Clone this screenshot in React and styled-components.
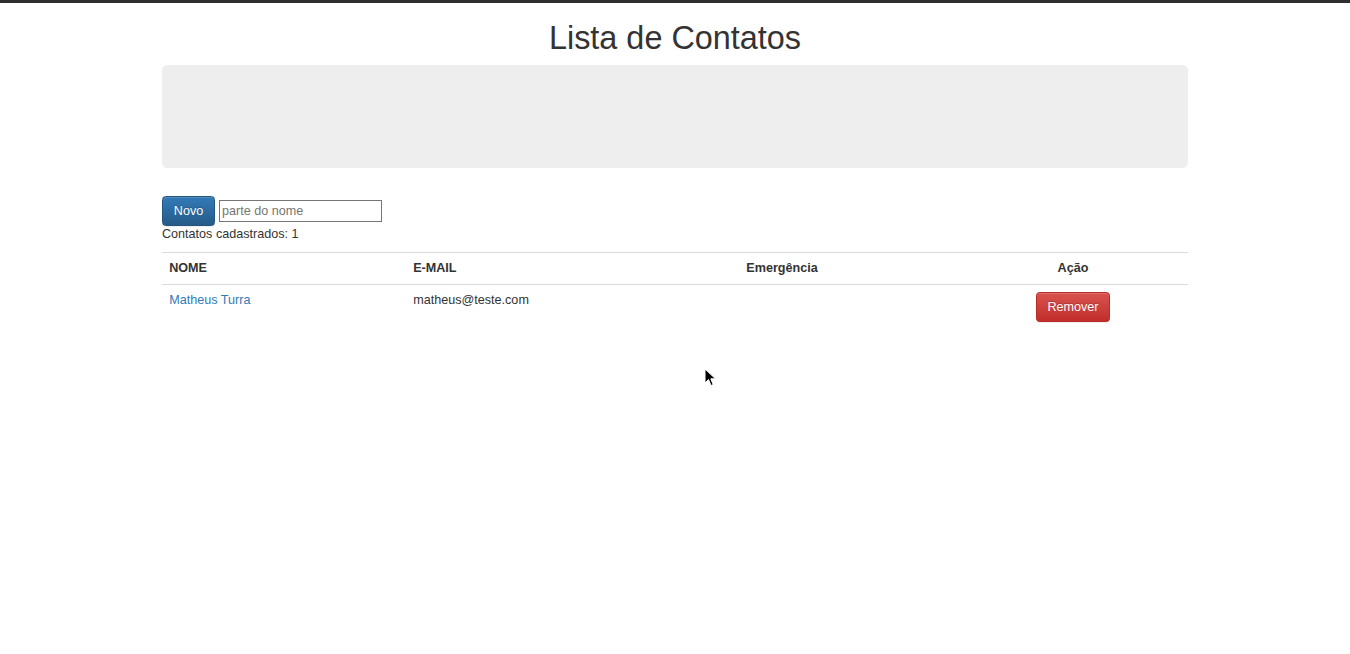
import React, { useState } from 'react'
import styled, { createGlobalStyle } from 'styled-components'

const GlobalStyle = createGlobalStyle`
  html, body {
    margin: 0;
    padding: 0;
    background: #fff;
  }
  body {
    font-family: "Liberation Sans", Arial, Helvetica, sans-serif;
    font-size: 12.6px;
    line-height: 18px;
    color: #333;
  }
`

const TopBar = styled.div`
  height: 3px;
  background: #2e2e2e;
`

const Container = styled.div`
  width: 1026px;
  margin: 0 auto;
`

const Title = styled.h1`
  margin: 18px 0 8px;
  font-size: 32.4px;
  line-height: 35.6px;
  font-weight: 500;
  text-align: center;
  color: #333;
`

const Jumbotron = styled.div`
  height: 103.6px;
  background: #eee;
  border-radius: 5.4px;
  margin-bottom: 28px;
`

const Toolbar = styled.div`
  display: flex;
  align-items: center;
  gap: 4px;
  height: 30px;
`

const Button = styled.button`
  font-family: inherit;
  font-size: 12.6px;
  line-height: 18px;
  padding: 5px 10.8px;
  border-radius: 3.6px;
  border: 1px solid ${(p) => (p.$danger ? '#b92c28' : '#245580')};
  color: #fff;
  cursor: pointer;
  text-shadow: 0 -1px 0 rgba(0, 0, 0, 0.2);
  box-shadow: inset 0 1px 0 rgba(255, 255, 255, 0.15), 0 1px 1px rgba(0, 0, 0, 0.075);
  background-image: ${(p) =>
    p.$danger
      ? 'linear-gradient(to bottom, #d9534f 0, #c12e2a 100%)'
      : 'linear-gradient(to bottom, #337ab7 0, #265a88 100%)'};
`

const Search = styled.input`
  width: 163px;
  height: 21.6px;
  box-sizing: border-box;
  padding: 1px 2px;
  font-family: inherit;
  font-size: 12.6px;
  color: #333;
  border: 1px solid #767676;
  border-radius: 0;
  &::placeholder {
    color: #757575;
  }
`

const Count = styled.div`
  margin-top: -1.5px;
`

const Table = styled.table`
  width: 100%;
  margin-top: 9px;
  border-collapse: collapse;
  table-layout: fixed;
`

const Th = styled.th`
  padding: 6.6px 7.2px;
  text-align: ${(p) => p.$align || 'left'};
  font-weight: bold;
  border-top: 1px solid #ddd;
  border-bottom: 1px solid #ddd;
  vertical-align: bottom;
`

const Td = styled.td`
  padding: ${(p) => (p.$action ? '7.4px' : '6.6px')} 7.2px 6.6px;
  text-align: ${(p) => p.$align || 'left'};
  vertical-align: top;
`

const NameLink = styled.a`
  color: #337ab7;
  text-decoration: none;
`

const CursorMark = styled.svg`
  position: absolute;
  left: 704px;
  top: 368px;
  pointer-events: none;
`

const contacts = [{ id: 1, nome: 'Matheus Turra', email: 'matheus@teste.com', emergencia: '' }]

function App() {
  const [filtro, setFiltro] = useState('')
  const lista = contacts.filter((c) => c.nome.toLowerCase().includes(filtro.toLowerCase()))

  return (
    <>
      <GlobalStyle />
      <TopBar />
      <Container>
        <Title>Lista de Contatos</Title>
        <Jumbotron />
        <Toolbar>
          <Button>Novo</Button>
          <Search placeholder="parte do nome" value={filtro} onChange={(e) => setFiltro(e.target.value)} />
        </Toolbar>
        <Count>Contatos cadastrados: {lista.length}</Count>
        <Table>
          <colgroup>
            <col style={{ width: '244px' }} />
            <col style={{ width: '200px' }} />
            <col style={{ width: '352px' }} />
            <col style={{ width: '230px' }} />
          </colgroup>
          <thead>
            <tr>
              <Th>NOME</Th>
              <Th>E-MAIL</Th>
              <Th $align="center">Emergência</Th>
              <Th $align="center">Ação</Th>
            </tr>
          </thead>
          <tbody>
            {lista.map((c) => (
              <tr key={c.id}>
                <Td><NameLink href="#">{c.nome}</NameLink></Td>
                <Td>{c.email}</Td>
                <Td $align="center">{c.emergencia}</Td>
                <Td $align="center" $action><Button $danger>Remover</Button></Td>
              </tr>
            ))}
          </tbody>
        </Table>
      </Container>
      <CursorMark width="14" height="20" viewBox="0 0 14 20">
        <path d="M1 1 L1 15 L4.5 11.5 L7 17.5 L9.2 16.6 L6.8 10.8 L11.5 10.8 Z" fill="#000" stroke="#fff" strokeWidth="1" />
      </CursorMark>
    </>
  )
}

export default App
